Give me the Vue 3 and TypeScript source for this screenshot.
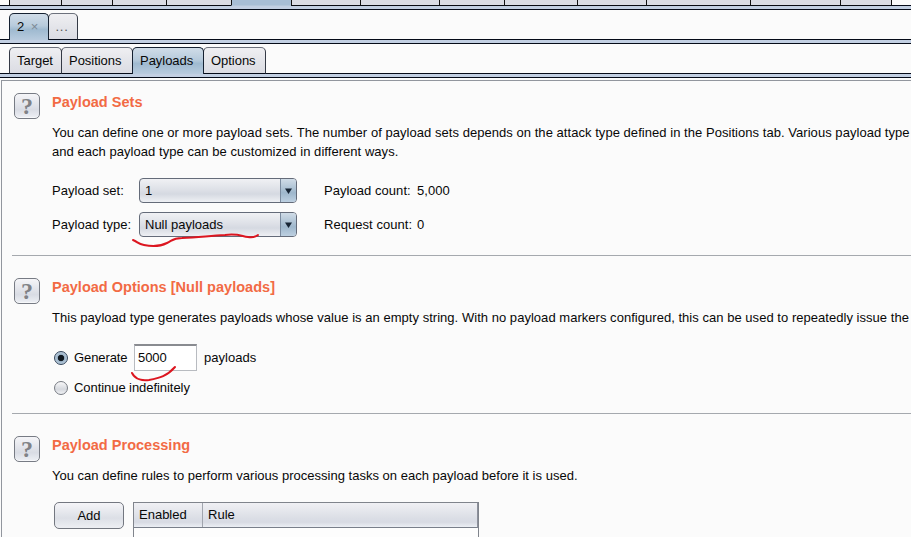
<script setup lang="ts">
import { ref } from 'vue'

const topTabs = [
  { width: 52 }, { width: 51 }, { width: 54 }, { width: 65 },
  { width: 60, active: true }, { width: 69 }, { width: 79 }, { width: 65 },
  { width: 73 }, { width: 69 }, { width: 104 }, { width: 90 }, { width: 52 },
]
const pages = [
  { name: 'Target', width: 53 },
  { name: 'Positions', width: 72 },
  { name: 'Payloads', width: 72 },
  { name: 'Options', width: 63 },
]
const page = ref('Payloads')
const mode = ref('generate')
</script>

<template>
  <main class="window">
    <nav class="strip top-strip">
      <span v-for="(t, i) in topTabs" :key="i" class="top-tab" :class="{ active: t.active }" :style="{ width: t.width + 'px' }"></span>
    </nav>
    <nav class="strip">
      <button class="tab attack active">2 <span class="close">×</span></button>
      <button class="tab more">...</button>
    </nav>
    <nav class="strip">
      <button v-for="p in pages" :key="p.name" class="tab page" :class="{ active: page === p.name }" :style="{ width: p.width + 'px' }" @click="page = p.name">{{ p.name }}</button>
    </nav>

    <div class="panel">
      <section class="section sets">
        <button class="help">?</button>
        <div class="body">
          <h2>Payload Sets</h2>
          <p class="p-sets">You can define one or more payload sets. The number of payload sets depends on the attack type defined in the Positions tab. Various payload type<br>and each payload type can be customized in different ways.</p>
          <div class="form">
            <label>Payload set:</label>
            <div class="combo"><span>1</span><i class="arrow"><svg width="7" height="6" viewBox="0 0 7 6"><path d="M0 .5h7L3.5 6z" fill="#172535" /></svg></i></div>
            <span class="count">Payload count:</span><span>5,000</span>
            <label>Payload type:</label>
            <div class="combo"><span>Null payloads</span><i class="arrow"><svg width="7" height="6" viewBox="0 0 7 6"><path d="M0 .5h7L3.5 6z" fill="#172535" /></svg></i>
              <svg class="mark mark-type" width="132" height="18" viewBox="0 0 132 18"><path d="M3 7C8 9 8 11 14 12C23 14 31 13 37 10C43 7 43 5 52 5C69 4 79 3 95 2C108 .5 111 3 118 4Q124 5 128 2" /></svg>
            </div>
            <span class="count">Request count:</span><span>0</span>
          </div>
        </div>
      </section>

      <section class="section options">
        <button class="help">?</button>
        <div class="body">
          <h2>Payload Options [Null payloads]</h2>
          <p class="p-options">This payload type generates payloads whose value is an empty string. With no payload markers configured, this can be used to repeatedly issue the</p>
          <div class="choice generate" @click="mode = 'generate'">
            <i class="radio" :class="{ on: mode === 'generate' }"></i><span class="gen-label">Generate</span>
            <div class="field">5000
              <svg class="mark mark-count" width="50" height="18" viewBox="0 0 50 18"><path d="M3 8C6 14 13 16 20 15C31 13 38 11 46 2" /></svg>
            </div>
            <span>payloads</span>
          </div>
          <div class="choice" @click="mode = 'forever'"><i class="radio" :class="{ on: mode === 'forever' }"></i><span class="forever">Continue indefinitely</span></div>
        </div>
      </section>

      <section class="section processing">
        <button class="help">?</button>
        <div class="body">
          <h2>Payload Processing</h2>
          <p class="p-processing">You can define rules to perform various processing tasks on each payload before it is used.</p>
          <div class="rules">
            <button class="add">Add</button>
            <div class="table"><div class="head"><span class="enabled">Enabled</span><span class="rule">Rule</span></div></div>
          </div>
        </div>
      </section>
    </div>
  </main>
</template>

<style>
body { margin: 0; overflow: hidden; background: #fbfbfb; }
</style>

<style scoped>
* { box-sizing: border-box; }
.window { width: 911px; height: 537px; overflow: hidden; display: flex; flex-direction: column; background: #fbfbfb; color: #080808; font: 13px/19px "Liberation Sans", Arial, sans-serif; letter-spacing: .03px; }
button { font: inherit; letter-spacing: inherit; color: inherit; padding: 0; margin: 0; }
.strip { flex: none; height: 34px; display: flex; align-items: flex-end; padding: 0 0 4px 9px; background: linear-gradient(#050b18, #050b18) 0 100%/100% 1px no-repeat, linear-gradient(#c2cfe2, #c2cfe2) 0 calc(100% - 1px)/100% 3px no-repeat, linear-gradient(#050b18, #050b18) 0 calc(100% - 4px)/100% 1px no-repeat; }
.top-strip { height: 10px; }
.top-tab { height: 6px; border-left: 1px solid #111; border-bottom: 1px solid #080b12; background: #dadce4; }
.top-tab:last-child { border-right: 1px solid #111; }
.top-tab.active { background: #a8bed5; border-bottom-color: #b4c6da; }
.tab { height: 27px; border: 1px solid #343a46; border-top-color: #6c717c; border-bottom-color: #050b18; border-radius: 5px 5px 0 0; margin-right: -1px; padding-right: 2px; background: linear-gradient(#efeff2, #e4e5ea 50%, #dbdce3); line-height: 25px; text-align: center; white-space: nowrap; letter-spacing: 0; }
.tab.page { text-align: left; padding: 0 0 0 7px; letter-spacing: -.03px; }
.tab.active { z-index: 1; border-color: #152131; border-bottom: 0; padding-bottom: 1px; background: linear-gradient(#d0dce8 0, #b7cbdc 45%, #9fbad0 60%, #b8cbde); }
.attack { width: 40px; text-align: left; padding-left: 7px; }
.close { font-size: 13px; color: #7d8995; margin-left: 3px; }
.more { width: 30px; letter-spacing: .7px; color: #555; }
.panel { flex: none; height: 457px; margin: 2px 0 0 1px; border-top: 1px solid #92969e; border-left: 1px solid #92969e; padding-left: 10px; overflow: hidden; }
.section { display: flex; gap: 12px; padding: 22px 0 0 2px; height: 158px; border-bottom: 1px solid #a5a9ae; }
.sets { height: 175px; padding-top: 12px; }
.processing { border: 0; }
.help { flex: none; width: 26px; height: 26px; border: 1px solid #777b84; border-radius: 5px; background: linear-gradient(#f5f5f8, #d9dce4 65%, #eef0f5); color: #808286; font: bold 24px/25px "Liberation Serif", serif; letter-spacing: 0; text-align: center; box-shadow: inset 0 -1px #fff8; }
.body { flex: 1; min-width: 0; }
h2 { margin: 0 0 12px; font-size: 14.5px; line-height: 18px; color: #f26a44; letter-spacing: .02px; white-space: nowrap; }
p { margin: 0; white-space: nowrap; }
.p-sets { letter-spacing: .045px; }
.p-options { letter-spacing: .034px; }
.p-processing { letter-spacing: .015px; }
.form { display: grid; grid-template-columns: 87px 158px 120px 80px; grid-template-rows: 25px 25px; row-gap: 9px; margin-top: 17px; align-items: center; }
.form .count { padding-left: 27px; letter-spacing: .05px; white-space: nowrap; }
.combo { position: relative; height: 25px; display: flex; justify-content: space-between; align-items: stretch; border: 1px solid #646b79; border-radius: 4px; background: linear-gradient(#f0f1f4, #dcdfe6 50%, #d5d9e1 65%, #eef0f4); line-height: 23px; padding-left: 5px; letter-spacing: 0; }
.arrow { width: 16px; border-left: 1px solid #7b8ca0; border-radius: 0 3px 3px 0; background: linear-gradient(#d0dce7, #9eb7cc 60%, #bdd0e1); display: flex; align-items: center; justify-content: center; }
.mark { position: absolute; fill: none; stroke: #dc1620; stroke-width: 2; stroke-linecap: round; stroke-linejoin: round; overflow: visible; }
.mark-type { left: -10px; top: 20px; }
.mark-count { left: -6px; top: 19px; }
.choice { display: flex; align-items: center; height: 27px; padding-left: 2px; }
.generate { margin-top: 17px; margin-bottom: 3px; }
.radio { width: 14px; height: 14px; border: 1px solid #777b83; border-radius: 50%; margin-right: 6px; background: linear-gradient(#f8f8f9, #d5d8de 60%, #f0f1f4); flex: none; }
.radio.on { border-color: #34465c; background: radial-gradient(circle, #101820 0 2.8px, #9db5ca 3.6px, #c3d3e1 7px); }
.gen-label { width: 60px; letter-spacing: -.1px; }
.forever { letter-spacing: -.06px; }
.field { position: relative; width: 63px; height: 27px; border: 1px solid #b8bbc0; border-top: 2px solid #898b90; background: #fff; padding-left: 3px; line-height: 24px; margin-right: 7px; letter-spacing: -.1px; }
.rules { display: flex; align-items: flex-start; padding: 17px 0 0 2px; gap: 9px; }
.add { width: 70px; height: 27px; border: 1px solid #737780; border-radius: 5px; background: linear-gradient(#f5f5f8, #dcdfe6 60%, #edeff3); line-height: 25px; }
.table { width: 346px; height: 60px; border: 1px solid #80848c; background: #fdfdfd; }
.head { display: flex; height: 25px; border-bottom: 1px solid #797f8a; background: linear-gradient(#f0f0f4, #dcdfe6 60%, #d7dae3 80%, #eceff4); line-height: 23px; border-right: 1px solid #8c909b; }
.enabled { width: 69px; border-right: 1px solid #a1a5ae; padding-left: 5px; letter-spacing: 0; }
.rule { padding-left: 5px; }
</style>
